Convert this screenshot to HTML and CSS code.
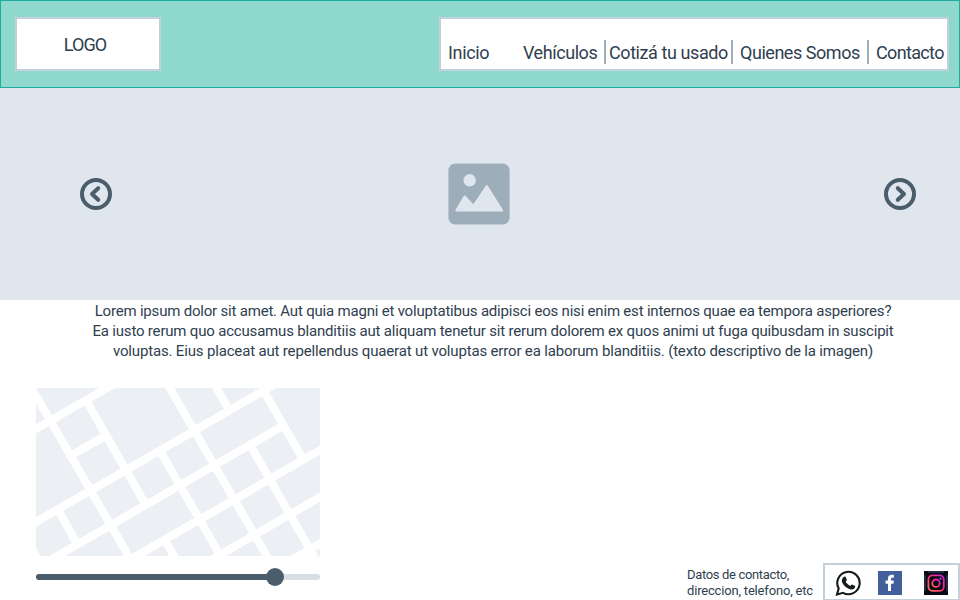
FILE: index.html
```html
<!DOCTYPE html>
<html lang="es">
<head>
<meta charset="utf-8">
<title>Inicio</title>
<link rel="stylesheet" href="styles.css">
</head>
<body>
<header class="header">
  <div class="logo">LOGO</div>
  <nav class="nav">
    <a class="inicio">Inicio</a>
    <a class="vehiculos">Vehículos</a>
    <a class="cotiza">Cotizá tu usado</a>
    <a class="quienes">Quienes Somos</a>
    <a class="contacto">Contacto</a>
  </nav>
</header>
<section class="carousel">
  <svg class="arrow" viewBox="0 0 32 32"><circle cx="16" cy="16" r="14"/><path d="M18.2 10.2 12 16l6.2 5.8"/></svg>
  <svg class="picture" viewBox="0 0 62 62"><rect x=".4" y=".4" width="61.2" height="61.2" rx="7"/><circle class="light" cx="21.7" cy="17.3" r="6.2"/><path class="light" d="M7.6 46.8 15.6 33Q16.6 31.3 17.8 33L25.3 41.2 37.8 22.8Q38.8 21.4 39.8 22.8L54.6 46.2Q55.6 48.6 54 48.6H8.2Q6.6 48.6 7.6 46.8Z"/></svg>
  <svg class="arrow" viewBox="0 0 32 32"><circle cx="16" cy="16" r="14"/><path d="M13.8 10.2 20 16l-6.2 5.8"/></svg>
</section>
<p class="description">
  <span class="l1">Lorem ipsum dolor sit amet. Aut quia magni et voluptatibus adipisci eos nisi enim est internos quae ea tempora asperiores?</span>
  <span class="l2">Ea iusto rerum quo accusamus blanditiis aut aliquam tenetur sit rerum dolorem ex quos animi ut fuga quibusdam in suscipit</span>
  <span class="l3">voluptas. Eius placeat aut repellendus quaerat ut voluptas error ea laborum blanditiis. (texto descriptivo de la imagen)</span>
</p>
<footer class="bottom">
  <div class="location">
    <svg class="map" viewBox="0 0 284 168">
      <path d="M-8 45.6 80-5.2M-8 138.6 241-5.1M10 174.5 247 37.8M90 174 292 57.5M170 174.9 292 104.5M250 175.2 292 151M37.3 66.3 67.3 49"/>
      <path d="M-8-6.1 96.5 175M50.7 13.5 109 115.4M130.3-6 234.8 175M124 63 188.2 174M177-6 193 21.7M227 2 265.7 68.7M214.5 57.5 281 174M21.7 121 40.4 154.5M-9.2 152 3.6 174M128.5 151.8 142 175"/>
    </svg>
    <div class="slider"><div class="fill"></div><div class="thumb"></div></div>
  </div>
  <div class="contact">
    <p class="data"><span class="d1">Datos de contacto,</span><span class="d2">direccion, telefono, etc</span></p>
    <div class="social">
      <svg class="wa" viewBox="0 0 26 26"><path class="bubble" d="M2 24.4 3.7 18.5A11.2 11.2 0 1 1 8 22.8Z"/><path class="phone" d="M9.1 6.8c.5-.4 1.2-.3 1.5.2l1.2 2.7c.2.6-.8 1.5-1.1 1.9.9 2 2.5 3.5 4.6 4.3.5-.5 1.2-1.7 1.8-1.5l2.6 1.3c.9.5.2 2.2-.4 2.8-1.6 1.4-3.7 1-5.6.2-3.1-1.3-5.2-3.7-6.4-6-1.1-2.1-.1-4.9 1.8-5.9Z"/></svg>
      <svg class="fb" viewBox="0 0 24 24"><rect width="24" height="24"/><path d="M10 20v-7.3H7.6V9.6H10V7.5C10 4.9 11.5 3.8 13.7 3.8h2.1v2.9h-1.5c-1 0-1.3.5-1.3 1.3v1.6h2.8l-.4 3.1H13V20Z"/></svg>
      <svg class="ig" viewBox="0 0 24 24">
        <defs><linearGradient id="ig" x1="1" y1="0" x2="0" y2="1"><stop offset="0" stop-color="#c02bd8"/><stop offset=".5" stop-color="#ff2875"/><stop offset="1" stop-color="#ff784d"/></linearGradient></defs>
        <rect width="24" height="24" fill="#080a16"/><path d="M4 1h16M1 4v16M23 4v16" stroke="#273852" stroke-width="1.5"/>
        <g fill="none" stroke="url(#ig)" stroke-width="1.8"><rect x="4.4" y="4.4" width="15.4" height="15.4" rx="4"/><circle cx="12" cy="12.2" r="3.7"/></g><circle cx="16.5" cy="7.7" r="1.1" fill="#f13bb4"/>
      </svg>
    </div>
  </div>
</footer>
</body>
</html>
```
FILE: styles.css
```css
* { box-sizing: border-box; }
body { margin: 0; width: 960px; height: 600px; overflow: hidden; background: #fff; color: #2f404f; font-family: Roboto, "Liberation Sans", sans-serif; }
p { margin: 0; }
svg { display: block; flex: none; }
.header { height: 88px; background: #8fd8ce; border: 1px solid #1aae9f; display: flex; justify-content: space-between; align-items: flex-start; padding: 16px 10px 0 14px; font-size: 18px; }
.logo, .nav { height: 54px; background: #fff; border: 2px solid #c3cfd9; }
.logo { width: 146px; padding-right: 6px; display: flex; align-items: center; justify-content: center; letter-spacing: -.9px; }
.nav { width: 510px; padding: 21px 0 0 7px; display: grid; grid-template-columns: 75px 83px 127px 136px 78px; line-height: 26px; white-space: nowrap; }
.nav a { height: 24px; }
.inicio { letter-spacing: -.35px; }
.vehiculos { letter-spacing: -.45px; }
.cotiza { letter-spacing: -.42px; }
.quienes { letter-spacing: -.46px; }
.contacto { letter-spacing: -.65px; }
.vehiculos, .cotiza, .quienes { border-right: 2px solid #9fafbc; }
.cotiza { padding-left: 3px; }
.quienes, .contacto { padding-left: 7px; }
.carousel { height: 212px; background: #dfe6ee; padding: 0 44px 0 80px; display: flex; align-items: center; justify-content: space-between; }
.arrow { width: 32px; height: 32px; fill: none; stroke: #4b5c6b; stroke-width: 4; stroke-linecap: round; stroke-linejoin: round; }
.picture { width: 62px; height: 62px; fill: #9eadba; margin-right: 38px; }
.picture .light { fill: #dfe6ee; }
.description { height: 88px; padding: 1px 0 0 26px; text-align: center; font-size: 15px; line-height: 20px; white-space: nowrap; }
.description span { display: block; }
.l1 { letter-spacing: -.2px; }
.l2 { letter-spacing: -.185px; }
.l3 { letter-spacing: -.165px; }
.bottom { height: 212px; padding-left: 36px; display: flex; justify-content: space-between; align-items: flex-start; }
.location { width: 284px; }
.map { width: 284px; height: 168px; background: #ecf0f5; fill: none; stroke: #fff; stroke-width: 8; }
.slider { margin-top: 18px; height: 6px; border-radius: 3px; background: #d8dee6; display: flex; align-items: center; }
.fill { width: 239px; height: 6px; border-radius: 3px; background: #4b5c6b; }
.thumb { width: 18px; height: 18px; border-radius: 50%; background: #4b5c6b; margin-left: -9px; }
.contact { width: 273px; margin-top: 175px; display: flex; justify-content: space-between; }
.data { font-size: 13px; line-height: 16px; padding-top: 4px; white-space: nowrap; }
.data span { display: block; }
.d1 { letter-spacing: -.34px; }
.d2 { letter-spacing: -.18px; }
.social { width: 137px; height: 38px; border: 2px solid #c3cfd9; padding: 5px 10px 0 10px; display: flex; align-items: flex-start; }
.wa { width: 26px; height: 26px; }
.bubble { fill: none; stroke: #161b1c; stroke-width: 2.1; }
.phone { fill: #161b1c; }
.fb, .ig { width: 24px; height: 24px; margin-top: 1px; }
.fb { margin-left: 17px; margin-right: 22px; }
.fb rect { fill: #425f9b; }
.fb path { fill: #fff; }
```
